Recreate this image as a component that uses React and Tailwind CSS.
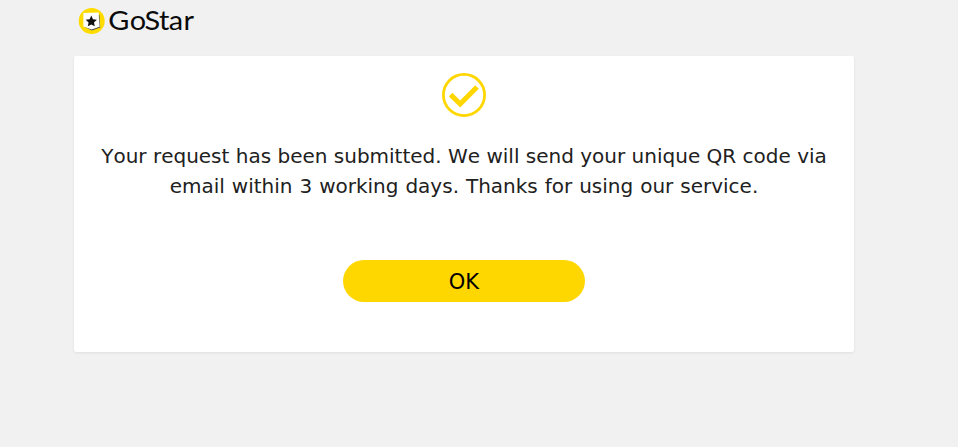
function Logo() {
  return (
    <svg className="block" width="130" height="40" viewBox="0 0 130 40" role="img" aria-label="GoStar">
      <circle cx="17.7" cy="21" r="13" fill="#ffdc00" />
      <path d="M10 26.6 17.8 30.6 26.2 27.6 25.4 14.5" fill="#444" />
      <path d="M9.4 13 24.6 12.6 25.7 26.7 17.6 29.6 9.4 26.4z" fill="#fff" />
      <path
        d="m17.3 15.6 1.7 3.6 3.9.5-2.9 2.7.8 3.9-3.5-1.9-3.5 1.9.8-3.9-2.9-2.7 3.9-.5z"
        fill="#111"
      />
      <text
        y="30.5"
        x="32.6 53 67.2 81 90.2 104.4"
        fontSize="27.5"
        fill="#0a0a0a"
        transform="scale(1.05 1)"
        className="font-['Lato',sans-serif]"
      >
        GoStar
      </text>
    </svg>
  );
}

function CheckIcon() {
  return (
    <svg className="block" width="44" height="44" viewBox="0 0 44 44" aria-hidden="true">
      <circle cx="22" cy="22" r="20.6" fill="none" stroke="#ffd700" strokeWidth="2.8" />
      <path d="m8.6 21.6 9.6 9.4L35 14" fill="none" stroke="#ffd700" strokeWidth="5" />
    </svg>
  );
}

export default function App() {
  return (
    <div className="min-h-screen bg-[#f1f1f1] pl-[74px] font-['DejaVu_Sans',sans-serif]">
      <header className="h-14">
        <Logo />
      </header>
      <main className="flex h-[296px] w-[780px] flex-col items-center rounded-[2px] bg-white pt-[17px] shadow-[0_1px_3px_rgba(0,0,0,0.08)]">
        <CheckIcon />
        <p className="mt-6 text-center text-[20px] leading-[30px] whitespace-nowrap text-[#212121] [font-kerning:none]">
          <span className="block">
            Your request has been submitted. We will send your unique QR code via
          </span>
          <span className="block [word-spacing:0.6px]">
            email within 3 working days. Thanks for using our service.
          </span>
        </p>
        <button className="mt-[59px] h-[42px] w-[242px] rounded-full bg-[#ffd700] pt-[3px] text-[21px] text-black">
          OK
        </button>
      </main>
    </div>
  );
}
